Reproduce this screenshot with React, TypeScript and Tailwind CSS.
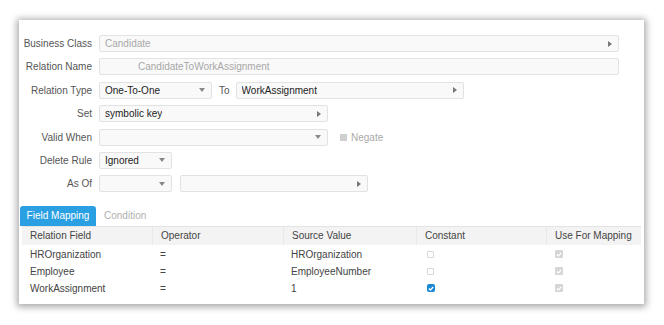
const font = { fontFamily: '"Liberation Sans", Arial, sans-serif' };

function Arrow() {
  return (
    <svg width="4" height="6" viewBox="0 0 4 6" className="shrink-0">
      <path d="M0 0 L4 3 L0 6 Z" fill="#777" />
    </svg>
  );
}

function Caret() {
  return (
    <svg width="6" height="4" viewBox="0 0 6 4" className="shrink-0">
      <path d="M0 0 L6 0 L3 4 Z" fill="#888" />
    </svg>
  );
}

function Field({
  width,
  value,
  icon,
  muted,
  pad = "pl-[5px]",
}: {
  width: string;
  value?: string;
  icon?: "arrow" | "caret";
  muted?: boolean;
  pad?: string;
}) {
  return (
    <div
      className={`${width} flex h-[17px] items-center justify-between rounded-[2px] border border-[#e2e2e2] bg-[#f9f9f9] ${pad} pr-[6px] text-[10px] ${
        muted ? "text-[#a8a8a8]" : "text-[#222]"
      }`}
    >
      <span className="truncate">{value}</span>
      {icon === "arrow" && <Arrow />}
      {icon === "caret" && <Caret />}
    </div>
  );
}

function Row({ label, children }: { label: string; children: React.ReactNode }) {
  return (
    <div className="flex h-[17px] items-center">
      <div className="w-[74px] pr-px text-right text-[10px] text-[#555]">{label}</div>
      <div className="ml-[6px] flex items-center">{children}</div>
    </div>
  );
}

function Box({ state }: { state: "empty" | "grey" | "blue" }) {
  if (state === "empty")
    return <div className="h-[7px] w-[7px] rounded-[1px] border border-[#d8d8d8] bg-white" />;
  if (state === "grey")
    return (
      <div className="flex h-[8px] w-[8px] items-center justify-center rounded-[1px] bg-[#d6d6d6]">
        <svg width="6" height="5" viewBox="0 0 6 5">
          <path d="M0.8 2.5 L2.4 4 L5.2 1" stroke="#fff" strokeWidth="1.2" fill="none" />
        </svg>
      </div>
    );
  return (
    <div className="flex h-[8px] w-[8px] items-center justify-center rounded-[2px] bg-[#1a8ad4]">
      <svg width="6" height="5" viewBox="0 0 6 5">
        <path d="M0.8 2.5 L2.4 4 L5.2 1" stroke="#fff" strokeWidth="1.3" fill="none" />
      </svg>
    </div>
  );
}

const rows = [
  { field: "HROrganization", op: "=", src: "HROrganization", constant: "empty" as const },
  { field: "Employee", op: "=", src: "EmployeeNumber", constant: "empty" as const },
  { field: "WorkAssignment", op: "=", src: "1", constant: "blue" as const },
];

const cols = ["w-[130px]", "w-[131px]", "w-[133px]", "w-[130px]", "flex-1"];

export default function App() {
  return (
    <div className="h-[325px] w-[664px] bg-white pl-[19px] pt-[20px]" style={font}>
      <div className="flex h-[284px] w-[625px] flex-col bg-white pt-[15px] shadow-[0_1px_7px_2px_rgba(0,0,0,0.35)]">
        <div className="flex flex-col gap-[6.4px]">
          <Row label="Business Class">
            <Field width="w-[520px]" value="Candidate" icon="arrow" muted />
          </Row>
          <Row label="Relation Name">
            <Field width="w-[520px]" value="CandidateToWorkAssignment" muted pad="pl-[38px]" />
          </Row>
          <Row label="Relation Type">
            <Field width="w-[113px]" value="One-To-One" icon="caret" />
            <span className="ml-[7px] mr-[6px] text-[10px] text-[#555]">To</span>
            <Field width="w-[228px]" value="WorkAssignment" icon="arrow" />
          </Row>
          <Row label="Set">
            <Field width="w-[229px]" value="symbolic key" icon="arrow" />
          </Row>
          <Row label="Valid When">
            <Field width="w-[229px]" icon="caret" />
            <div className="ml-[12px] h-[7px] w-[7px] bg-[#cfcfcf]" />
            <span className="ml-[4px] text-[10px] text-[#aaa]">Negate</span>
          </Row>
          <Row label="Delete Rule">
            <Field width="w-[73px]" value="Ignored" icon="caret" />
          </Row>
          <Row label="As Of">
            <Field width="w-[73px]" icon="caret" />
            <div className="ml-[8px]">
              <Field width="w-[188px]" icon="arrow" />
            </div>
          </Row>
        </div>

        <div className="mt-[13.6px] flex h-[20px] items-end pl-[1px]">
          <div className="flex h-[20px] w-[76px] items-center justify-center rounded-t-[3px] bg-[#2a9fe2] text-[10px] text-white">
            Field Mapping
          </div>
          <div className="flex h-[20px] items-center pl-[8px] text-[10px] text-[#b0b0b0]">Condition</div>
        </div>

        <div className="mx-[3px] flex flex-col text-[10px] text-[#444]">
          <div className="flex h-[19px] items-center border-t border-[#e4e4e4] bg-[#f3f3f3]">
            {["Relation Field", "Operator", "Source Value", "Constant", "Use For Mapping"].map((h, i) => (
              <div
                key={h}
                className={`${cols[i]} flex h-full items-center pl-[8px] ${i > 0 ? "border-l border-[#e9e9e9]" : ""}`}
              >
                {h}
              </div>
            ))}
          </div>
          <div className="h-[1px]" />
          {rows.map((r) => (
            <div key={r.field} className="flex h-[17px] items-center">
              <div className={`${cols[0]} pl-[8px]`}>{r.field}</div>
              <div className={`${cols[1]} pl-[8px]`}>{r.op}</div>
              <div className={`${cols[2]} pl-[8px]`}>{r.src}</div>
              <div className={`${cols[3]} pl-[11px]`}>
                <Box state={r.constant} />
              </div>
              <div className={`${cols[4]} pl-[9px]`}>
                <Box state="grey" />
              </div>
            </div>
          ))}
        </div>
      </div>
    </div>
  );
}
